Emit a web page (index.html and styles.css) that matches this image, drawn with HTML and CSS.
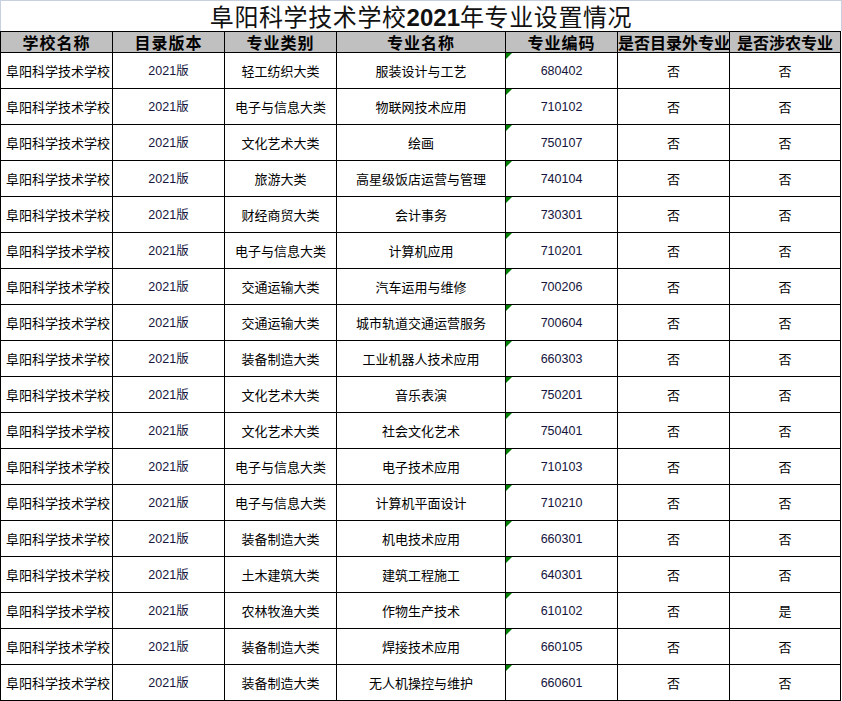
FILE: index.html
```html
<!DOCTYPE html>
<html lang="zh">
<head>
<meta charset="utf-8">
<title>阜阳科学技术学校2021年专业设置情况</title>
<link rel="stylesheet" href="styles.css">
</head>
<body>
<div class="sheet">
  <div class="title">阜阳科学技术学校<b class="yr">2021</b>年专业设置情况</div>
  <table class="grid">
    <colgroup>
      <col class="c112"><col class="c112"><col class="c112"><col class="c169"><col class="c112"><col class="c112"><col class="c111">
    </colgroup>
    <thead>
      <tr class="head">
        <th>学校名称</th><th>目录版本</th><th>专业类别</th><th>专业名称</th><th>专业编码</th><th class="tight">是否目录外专业</th><th class="tight">是否涉农专业</th>
      </tr>
    </thead>
    <tbody>
      <tr><td class="school">阜阳科学技术学校</td><td class="num">2021版</td><td>轻工纺织大类</td><td>服装设计与工艺</td><td class="code">680402</td><td>否</td><td>否</td></tr>
      <tr><td class="school">阜阳科学技术学校</td><td class="num">2021版</td><td>电子与信息大类</td><td>物联网技术应用</td><td class="code">710102</td><td>否</td><td>否</td></tr>
      <tr><td class="school">阜阳科学技术学校</td><td class="num">2021版</td><td>文化艺术大类</td><td>绘画</td><td class="code">750107</td><td>否</td><td>否</td></tr>
      <tr><td class="school">阜阳科学技术学校</td><td class="num">2021版</td><td>旅游大类</td><td>高星级饭店运营与管理</td><td class="code">740104</td><td>否</td><td>否</td></tr>
      <tr><td class="school">阜阳科学技术学校</td><td class="num">2021版</td><td>财经商贸大类</td><td>会计事务</td><td class="code">730301</td><td>否</td><td>否</td></tr>
      <tr><td class="school">阜阳科学技术学校</td><td class="num">2021版</td><td>电子与信息大类</td><td>计算机应用</td><td class="code">710201</td><td>否</td><td>否</td></tr>
      <tr><td class="school">阜阳科学技术学校</td><td class="num">2021版</td><td>交通运输大类</td><td>汽车运用与维修</td><td class="code">700206</td><td>否</td><td>否</td></tr>
      <tr><td class="school">阜阳科学技术学校</td><td class="num">2021版</td><td>交通运输大类</td><td>城市轨道交通运营服务</td><td class="code">700604</td><td>否</td><td>否</td></tr>
      <tr><td class="school">阜阳科学技术学校</td><td class="num">2021版</td><td>装备制造大类</td><td>工业机器人技术应用</td><td class="code">660303</td><td>否</td><td>否</td></tr>
      <tr><td class="school">阜阳科学技术学校</td><td class="num">2021版</td><td>文化艺术大类</td><td>音乐表演</td><td class="code">750201</td><td>否</td><td>否</td></tr>
      <tr><td class="school">阜阳科学技术学校</td><td class="num">2021版</td><td>文化艺术大类</td><td>社会文化艺术</td><td class="code">750401</td><td>否</td><td>否</td></tr>
      <tr><td class="school">阜阳科学技术学校</td><td class="num">2021版</td><td>电子与信息大类</td><td>电子技术应用</td><td class="code">710103</td><td>否</td><td>否</td></tr>
      <tr><td class="school">阜阳科学技术学校</td><td class="num">2021版</td><td>电子与信息大类</td><td>计算机平面设计</td><td class="code">710210</td><td>否</td><td>否</td></tr>
      <tr><td class="school">阜阳科学技术学校</td><td class="num">2021版</td><td>装备制造大类</td><td>机电技术应用</td><td class="code">660301</td><td>否</td><td>否</td></tr>
      <tr><td class="school">阜阳科学技术学校</td><td class="num">2021版</td><td>土木建筑大类</td><td>建筑工程施工</td><td class="code">640301</td><td>否</td><td>否</td></tr>
      <tr><td class="school">阜阳科学技术学校</td><td class="num">2021版</td><td>农林牧渔大类</td><td>作物生产技术</td><td class="code">610102</td><td>否</td><td>是</td></tr>
      <tr><td class="school">阜阳科学技术学校</td><td class="num">2021版</td><td>装备制造大类</td><td>焊接技术应用</td><td class="code">660105</td><td>否</td><td>否</td></tr>
      <tr><td class="school">阜阳科学技术学校</td><td class="num">2021版</td><td>装备制造大类</td><td>无人机操控与维护</td><td class="code">660601</td><td>否</td><td>否</td></tr>
    </tbody>
  </table>
</div>
</body>
</html>
```

FILE: styles.css
```css
html, body {
  margin: 0;
  padding: 0;
  background: #ffffff;
}

.sheet {
  width: 842px;
  font-family: "Noto Sans CJK SC", "Liberation Sans", sans-serif;
  color: #000;
}

.title {
  box-sizing: border-box;
  height: 31px;
  border-top: 1px solid #c8cfdf;
  border-left: 1px solid #c8cfdf;
  border-right: 1px solid #c8cfdf;
  text-align: center;
  font-size: 24px;
  letter-spacing: 0.6px;
  line-height: 29px;
  color: #111;
  white-space: nowrap;
}

.title .yr {
  font-family: "Liberation Sans", Arial, sans-serif;
  font-weight: 700;
  font-size: 24px;
  letter-spacing: 0;
}

.grid {
  width: 840px;
  table-layout: fixed;
  border-collapse: collapse;
  border: 1px solid #000;
}

.c112 { width: 112px; }
.c169 { width: 169px; }
.c111 { width: 111px; }

.grid th,
.grid td {
  border: 1px solid #000;
  padding: 0;
  text-align: center;
  white-space: nowrap;
  overflow: hidden;
}

.head th {
  height: 20px;
  background: #c0c0c0;
  font-size: 16px;
  font-weight: 700;
  line-height: 20px;
  letter-spacing: 1px;
  vertical-align: bottom;
  color: #000;
}

.head th.tight {
  letter-spacing: 0;
}

.grid td {
  height: 35px;
  font-size: 13px;
  line-height: 16px;
  vertical-align: middle;
}

.grid td.school {
  text-align: left;
  padding-left: 5px;
}

.grid td.num,
.grid td.code {
  font-family: "Liberation Sans", Arial, "Noto Sans CJK SC", sans-serif;
  font-size: 12.5px;
  color: #14143c;
}

.grid td.code {
  position: relative;
}

.grid td.code::before {
  content: "";
  position: absolute;
  top: 0;
  left: 0;
  width: 0;
  height: 0;
  border-top: 6px solid #008000;
  border-right: 6px solid transparent;
}
```
